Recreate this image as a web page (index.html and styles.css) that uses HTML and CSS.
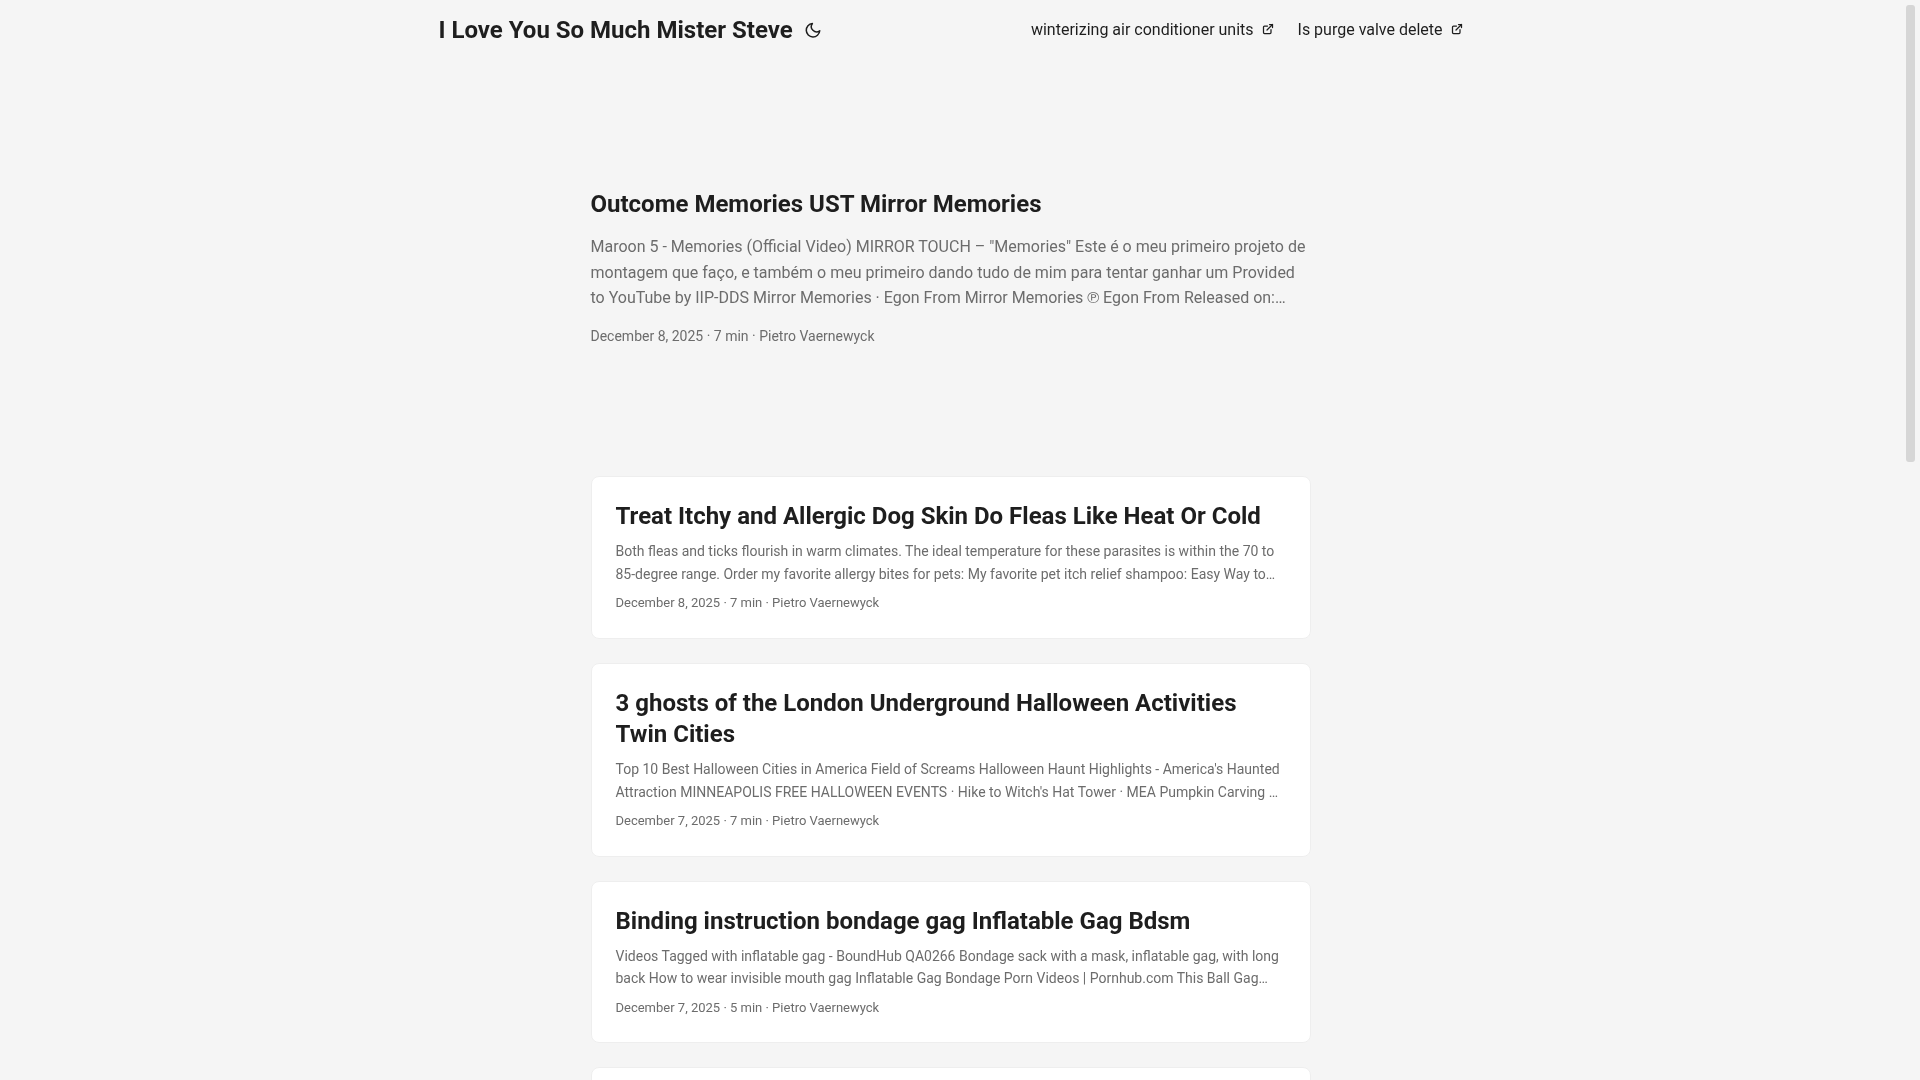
FILE: index.html
```html
<!DOCTYPE html>
<html lang="en">
<head>
<meta charset="utf-8">
<title>I Love You So Much Mister Steve</title>
<link rel="stylesheet" href="styles.css">
</head>
<body>
<div class="page">
<header class="header">
  <nav class="nav">
    <div class="logo">
      <a class="logo-link" href="#">I Love You So Much Mister Steve</a>
      <div class="logo-switches">
        <button class="theme-toggle" type="button" aria-label="Toggle theme">
          <svg class="moon" width="24" height="18" viewBox="0 0 24 24" fill="none" stroke="currentColor" stroke-width="2" stroke-linecap="round" stroke-linejoin="round"><path d="M21 12.79A9 9 0 1111.21 3 7 7 0 0021 12.79z"></path></svg>
        </button>
      </div>
    </div>
    <ul class="menu">
      <li><a href="#"><span>winterizing air conditioner units</span>&nbsp;&nbsp;<svg class="ext" fill="none" shape-rendering="geometricPrecision" stroke="currentColor" stroke-linecap="round" stroke-linejoin="round" stroke-width="2.5" viewBox="0 0 24 24" height="12" width="12"><path d="M18 13v6a2 2 0 01-2 2H5a2 2 0 01-2-2V8a2 2 0 012-2h6"></path><path d="M15 3h6v6"></path><path d="M10 14 21 3"></path></svg></a></li>
      <li><a href="#"><span>Is purge valve delete</span>&nbsp;&nbsp;<svg class="ext" fill="none" shape-rendering="geometricPrecision" stroke="currentColor" stroke-linecap="round" stroke-linejoin="round" stroke-width="2.5" viewBox="0 0 24 24" height="12" width="12"><path d="M18 13v6a2 2 0 01-2 2H5a2 2 0 01-2-2V8a2 2 0 012-2h6"></path><path d="M15 3h6v6"></path><path d="M10 14 21 3"></path></svg></a></li>
    </ul>
  </nav>
</header>
<main class="main">
  <article class="first-entry">
    <header class="first-title"><h1>Outcome Memories UST Mirror Memories</h1></header>
    <div class="first-content"><p>Maroon 5 - Memories (Official Video) MIRROR TOUCH – "Memories" Este é o meu primeiro projeto de montagem que faço, e também o meu primeiro dando tudo de mim para tentar ganhar um Provided to YouTube by IIP-DDS Mirror Memories · Egon From Mirror Memories ℗ Egon From Released on:…</p></div>
    <footer class="first-footer">December 8, 2025 · 7 min · Pietro Vaernewyck</footer>
  </article>
  <article class="post-entry">
    <header><h2>Treat Itchy and Allergic Dog Skin Do Fleas Like Heat Or Cold</h2></header>
    <div class="entry-content"><p>Both fleas and ticks flourish in warm climates. The ideal temperature for these parasites is within the 70 to 85-degree range. Order my favorite allergy bites for pets: My favorite pet itch relief shampoo: Easy Way to…</p></div>
    <footer class="entry-footer">December 8, 2025 · 7 min · Pietro Vaernewyck</footer>
  </article>
  <article class="post-entry">
    <header><h2>3 ghosts of the London Underground Halloween Activities Twin Cities</h2></header>
    <div class="entry-content"><p>Top 10 Best Halloween Cities in America Field of Screams Halloween Haunt Highlights - America's Haunted Attraction MINNEAPOLIS FREE HALLOWEEN EVENTS · Hike to Witch's Hat Tower · MEA Pumpkin Carving …</p></div>
    <footer class="entry-footer">December 7, 2025 · 7 min · Pietro Vaernewyck</footer>
  </article>
  <article class="post-entry">
    <header><h2>Binding instruction bondage gag Inflatable Gag Bdsm</h2></header>
    <div class="entry-content"><p>Videos Tagged with inflatable gag - BoundHub QA0266 Bondage sack with a mask, inflatable gag, with long back How to wear invisible mouth gag Inflatable Gag Bondage Porn Videos | Pornhub.com This Ball Gag…</p></div>
    <footer class="entry-footer">December 7, 2025 · 5 min · Pietro Vaernewyck</footer>
  </article>
  <article class="post-entry post-entry-next"></article>
</main>
</div>
<div class="scroll-thumb" aria-hidden="true"></div>
</body>
</html>
```
FILE: styles.css
```css
* {
  box-sizing: border-box;
}

html {
  background: #f5f5f5;
}

body {
  margin: 0;
  background: #f5f5f5;
  color: rgb(30, 30, 30);
  font-family: Roboto, "Liberation Sans", sans-serif;
  font-size: 18px;
  line-height: 1.6;
}

.page {
  padding-right: 19px;
  will-change: transform;
}

.scroll-thumb {
  position: fixed;
  top: 5px;
  right: 5px;
  width: 9px;
  height: 457px;
  border-radius: 3px;
  background: rgb(214, 214, 214);
}

a {
  color: inherit;
  text-decoration: none;
}

h1,
h2,
p,
ul {
  margin: 0;
  padding: 0;
}

.nav {
  display: flex;
  flex-wrap: wrap;
  justify-content: space-between;
  max-width: 1072px;
  margin-inline: auto;
  line-height: 60px;
}

.logo {
  display: flex;
  flex-wrap: inherit;
  margin: auto 24px;
}

.logo-link {
  display: block;
  font-size: 24px;
  font-weight: 700;
}

.logo-switches {
  display: inline-flex;
  margin: auto 4px;
}

.theme-toggle {
  margin: auto 4px;
  padding: 0;
  border: 0;
  background: none;
  color: inherit;
  font-size: 26px;
  cursor: pointer;
}

.moon {
  vertical-align: middle;
  transform: translateY(-10%);
}

.menu {
  display: flex;
  margin: auto 24px;
  list-style: none;
  white-space: nowrap;
}

.menu li + li {
  margin-inline-start: 24px;
}

.menu a {
  display: block;
  font-size: 16px;
}

.main {
  max-width: 768px;
  margin: auto;
  padding: 24px;
}

.first-entry {
  display: flex;
  flex-direction: column;
  justify-content: center;
  min-height: 320px;
  margin: 24px 0 48px;
}

.first-title h1 {
  font-size: 24px;
  line-height: 1.3;
}

.first-content {
  margin: 14px 0;
  color: rgb(108, 108, 108);
  font-size: 16px;
}

.first-footer {
  color: rgb(108, 108, 108);
  font-size: 14px;
}

.post-entry {
  margin-bottom: 24px;
  padding: 24px;
  border: 1px solid #eee;
  border-radius: 8px;
  background: #fff;
}

.post-entry h2 {
  font-size: 24px;
  line-height: 1.3;
}

.entry-content {
  margin: 8px 0;
  color: rgb(108, 108, 108);
  font-size: 14px;
  line-height: 1.6;
}

.entry-footer {
  color: rgb(108, 108, 108);
  font-size: 13px;
}

.post-entry-next {
  min-height: 160px;
}
```
